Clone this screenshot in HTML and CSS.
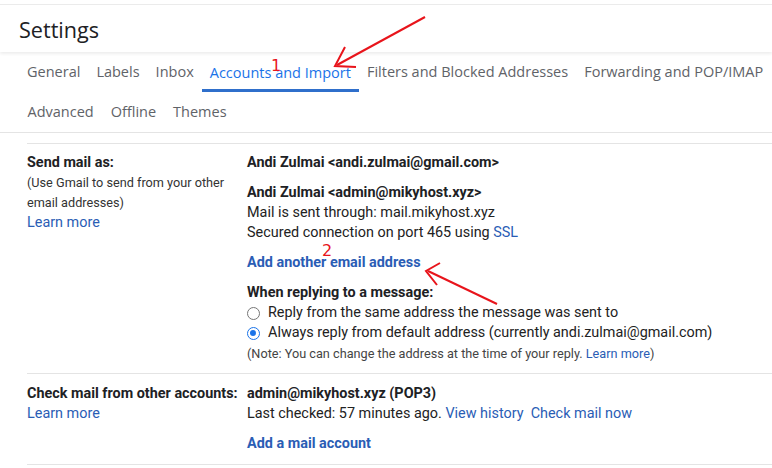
FILE: index.html
```html
<!DOCTYPE html>
<html>
<head>
<meta charset="utf-8">
<link rel="stylesheet" href="styles.css">
</head>
<body>
<div class="page">
  <header class="header">
    <h1 class="title">Settings</h1>
  </header>
  <nav class="tabs">
    <div class="tab-row">
      <span class="tab">General</span>
      <span class="tab">Labels</span>
      <span class="tab">Inbox</span>
      <span class="tab active">Accounts and Import</span>
      <span class="tab">Filters and Blocked Addresses</span>
      <span class="tab">Forwarding and POP/IMAP</span>
    </div>
    <div class="tab-row">
      <span class="tab">Advanced</span>
      <span class="tab">Offline</span>
      <span class="tab">Themes</span>
    </div>
  </nav>

  <section class="section s1">
    <div class="label">
      <div class="b">Send mail as:</div>
      <div class="hint">(Use Gmail to send from your other email addresses)</div>
      <a class="link">Learn more</a>
    </div>
    <div class="content">
      <div class="b">Andi Zulmai &lt;andi.zulmai@gmail.com&gt;</div>
      <div class="block">
        <div class="b">Andi Zulmai &lt;admin@mikyhost.xyz&gt;</div>
        <div>Mail is sent through: mail.mikyhost.xyz</div>
        <div>Secured connection on port 465 using <a class="link">SSL</a></div>
      </div>
      <div class="block"><a class="link b">Add another email address</a></div>
      <div class="block">
        <div class="b">When replying to a message:</div>
        <label class="radio-row"><span class="radio"></span>Reply from the same address the message was sent to</label>
        <label class="radio-row"><span class="radio on"></span>Always reply from default address (currently andi.zulmai@gmail.com)</label>
        <div class="note">(Note: You can change the address at the time of your reply. <a class="link">Learn more</a>)</div>
      </div>
    </div>
  </section>

  <section class="section s2">
    <div class="label">
      <div class="b">Check mail from other accounts:</div>
      <a class="link">Learn more</a>
    </div>
    <div class="content">
      <div class="b">admin@mikyhost.xyz (POP3)</div>
      <div>Last checked: 57 minutes ago. <a class="link">View history</a>&nbsp; <a class="link">Check mail now</a></div>
      <div class="block"><a class="link b">Add a mail account</a></div>
    </div>
  </section>

  <svg class="marks" width="772" height="468" viewBox="0 0 772 468">
    <g fill="none" stroke="#e8141b" stroke-width="2">
      <line x1="425" y1="13" x2="337" y2="61"/>
      <polyline points="345,43 335,62 356,63"/>
      <line x1="497" y1="300" x2="428" y2="267"/>
      <polyline points="440,259 426,267 437,281"/>
    </g>
    <text x="271" y="67" class="num">1</text>
    <text x="322" y="252" class="num">2</text>
  </svg>
</div>
</body>
</html>
```
FILE: styles.css
```css
* { box-sizing: border-box; }
html, body { margin: 0; padding: 0; background: #fff; }
body {
  font-family: Roboto, "Liberation Sans", Arial, sans-serif;
  font-size: 14.4px;
  color: #222;
  width: 772px;
  height: 468px;
  overflow: hidden;
}
.page { position: relative; height: 468px; }

.header {
  margin-top: 4px;
  border-top: 1px solid #ebebeb;
  height: 48px;
  padding-left: 19px;
  display: flex;
  align-items: center;
  box-shadow: 0 2px 3px rgba(0,0,0,0.07);
}
.title {
  margin: 0;
  font-family: "Open Sans", Roboto, sans-serif;
  font-weight: 400;
  font-size: 21.6px;
  color: #202124;
  padding-top: 2px;
}

.tabs {
  padding-left: 19px;
  border-bottom: 1px solid #e4e4e4;
}
.tab-row { display: flex; height: 40px; }
.tab {
  font-family: "Open Sans", Roboto, sans-serif;
  font-size: 14.5px;
  color: #5f6368;
  padding: 0 8px;
  display: flex;
  align-items: center;
  padding-top: 1px;
  border-bottom: 2px solid transparent;
}
.tab-row + .tab-row .tab { padding: 1px 8.5px 0; }
.tab.active { color: #1a73e8; border-bottom: 3px solid #2f6fcb; padding-top: 4px; }

.section {
  margin: 10px 0 0 27px;
  border-top: 1px solid #e4e4e4;
  display: flex;
  line-height: 20px;
}
.s1 { padding: 9px 0 9px; }
.s2 { margin-top: 0; padding: 10px 0 10px; border-bottom: 1px solid #e4e4e4; }
.label { width: 220px; flex: none; }
.hint { color: #333; width: 210px; font-size: 12.7px; }
.b { font-weight: 700; color: #202124; }
.link { color: #2a5db5; text-decoration: none; }
.link.b { color: #2a5db5; }
.block { margin-top: 10px; }
.radio-row { display: flex; align-items: center; }
.radio {
  width: 13px; height: 13px;
  border: 1px solid #767676;
  border-radius: 50%;
  margin-right: 8px;
  flex: none;
}
.radio.on { border-color: #1a73e8; border-width: 1.5px; position: relative; }
.radio.on::after {
  content: "";
  position: absolute;
  left: 2px; top: 2px;
  width: 6px; height: 6px;
  border-radius: 50%;
  background: #1a73e8;
}
.note { font-size: 12.7px; color: #444; margin-top: 1px; }

.marks { position: absolute; left: 0; top: 0; pointer-events: none; }
.num { fill: #e8141b; font-family: "DejaVu Sans", sans-serif; font-size: 16px; }
```
